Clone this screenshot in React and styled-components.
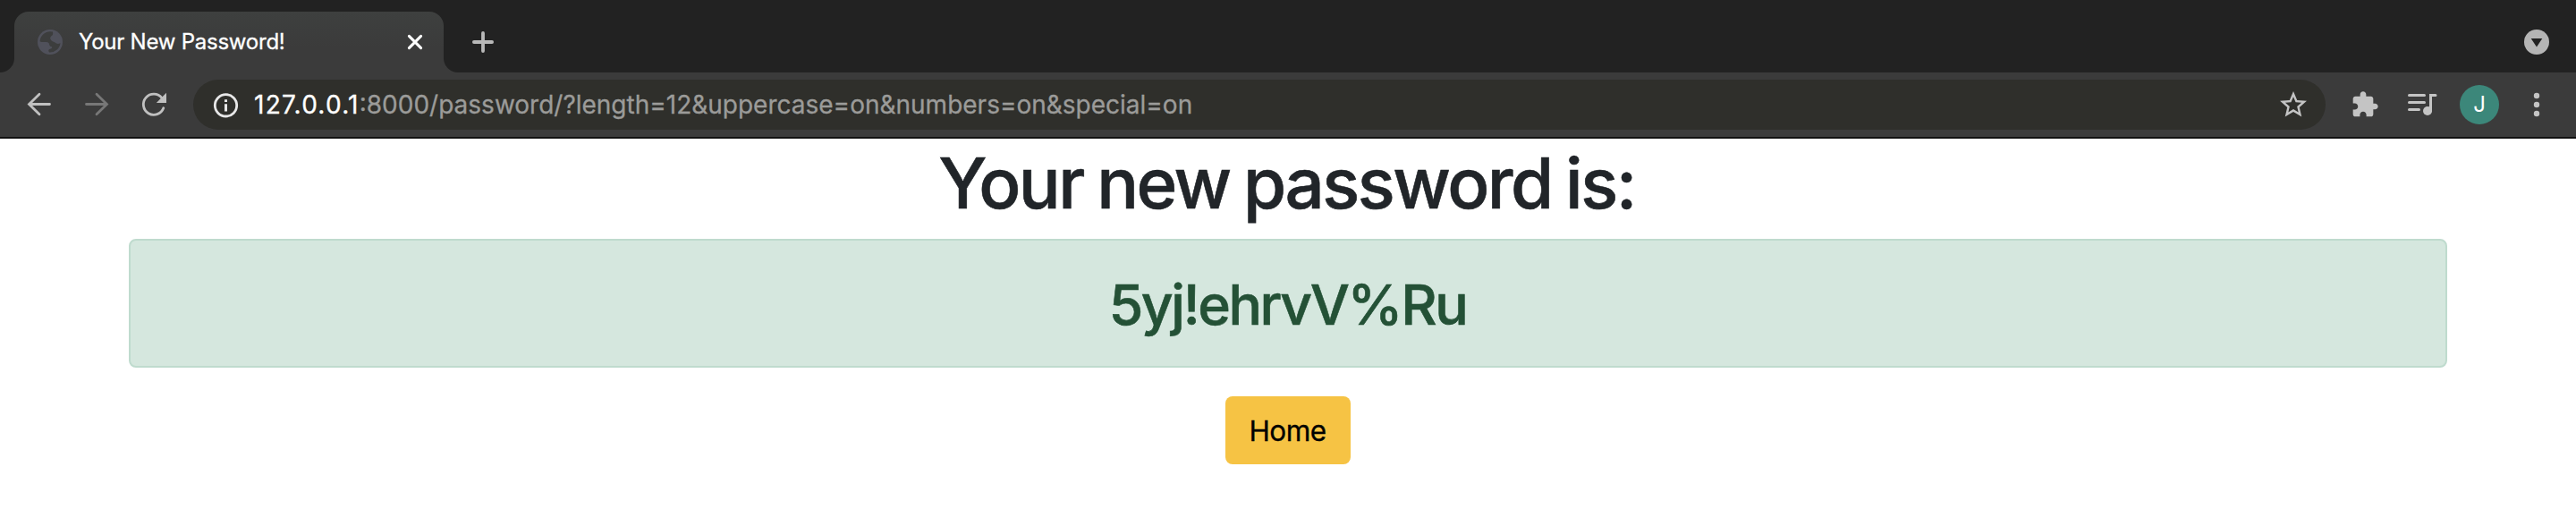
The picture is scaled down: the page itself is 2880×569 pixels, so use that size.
import React from "react";
import styled, { createGlobalStyle } from "styled-components";

const Global = createGlobalStyle`
  *, *::before, *::after { box-sizing: border-box; }
  body { margin: 0; background: #fff; font-family: Inter, "Liberation Sans", sans-serif; }
`;

const Window = styled.div`
  height: 569px;
  display: flex;
  flex-direction: column;
  background: #fff;
  overflow: hidden;
`;

const TabStrip = styled.header`
  height: 81px;
  padding: 13px 24px 0 16px;
  display: flex;
  background: #222222;
`;

const Tab = styled.div`
  position: relative;
  width: 480px;
  height: 68px;
  padding: 0 22px 0 23px;
  display: flex;
  align-items: center;
  background: linear-gradient(#3e403f, #3b3b3b 60%);
  border-radius: 16px 16px 0 0;

  &::before, &::after {
    content: "";
    position: absolute;
    bottom: 0;
    width: 16px;
    height: 16px;
  }
  &::before { left: -16px; background: radial-gradient(circle at 0 0, #222222 15.5px, #3b3b3b 16.5px); }
  &::after { right: -16px; background: radial-gradient(circle at 100% 0, #222222 15.5px, #3b3b3b 16.5px); }
`;

const Line = styled.span`
  display: block;
  white-space: pre;
  font-size: ${(p) => p.$size}px;
  line-height: ${(p) => p.$size * 1.25}px;
  letter-spacing: ${(p) => p.$track || 0}px;
  color: ${(p) => p.$color || "#fff"};
  -webkit-text-stroke: 0.3px currentColor;
`;

const TabTitle = styled(Line)`
  flex: 1;
  margin-left: 15px;
`;

const Glyph = styled.svg`
  display: block;
  flex: none;
  width: ${(p) => p.$w}px;
  height: ${(p) => p.$h || p.$w}px;
  margin-left: ${(p) => p.$ml || 0}px;
  overflow: visible;
`;

const NewTab = styled.div`
  margin-left: 32px;
  padding-top: 22px;
  flex: 1;
`;

const TabSearch = styled.div`
  padding: 20px 6px 0 0;
`;

const Toolbar = styled.div`
  height: 74px;
  padding: 0 0 0 24px;
  display: flex;
  align-items: center;
  background: #3b3b3b;
  border-bottom: 2px solid #111111;
`;

const AddressBar = styled.div`
  width: 2384px;
  height: 56px;
  margin-left: 26px;
  padding: 0 18px 0 20px;
  display: flex;
  align-items: center;
  border-radius: 28px;
  background: #2f2f2b;
`;

const Url = styled(Line)`
  flex: 1;
  margin-left: 15px;
`;

const Host = styled.span`
  letter-spacing: 1.25px;
  color: #fff;
`;

const Avatar = styled.div`
  width: 44px;
  height: 44px;
  margin-left: 25px;
  border-radius: 50%;
  display: flex;
  align-items: center;
  justify-content: center;
  background: #3c877a;
`;

const Initial = styled.span`
  font-size: 24px;
  line-height: 30px;
  color: #fff;
`;

const Page = styled.main`
  padding: 0 144px;
  display: flex;
  flex-direction: column;
  align-items: center;
`;

const Heading = styled.h1`
  margin: 0 3px 16px 0;
  height: 96px;
  line-height: 100px;
  font-size: 78px;
  font-weight: 500;
  letter-spacing: -2.5px;
  word-spacing: -3px;
  color: #212529;
  white-space: nowrap;
  -webkit-text-stroke: 0.6px currentColor;
`;

const Alert = styled.div`
  width: 100%;
  height: 144px;
  display: flex;
  align-items: center;
  justify-content: center;
  background: #d5e7de;
  border: 2px solid #bfdbce;
  border-radius: 8px;
`;

const Password = styled.h2`
  margin: 2px 1px 0 0;
  font-size: 62.4px;
  line-height: 77px;
  font-weight: 500;
  letter-spacing: -2.4px;
  color: #245136;
  -webkit-text-stroke: 0.6px currentColor;
`;

const HomeButton = styled.button`
  width: 140px;
  height: 76px;
  margin-top: 32px;
  padding: 2px 1px 0 0;
  border: 0;
  border-radius: 8px;
  background: #f6c344;
  color: #000;
  font: 400 31.5px/48px Inter, sans-serif;
  letter-spacing: -0.6px;
  -webkit-text-stroke: 0.3px currentColor;
`;

export default function App() {
  return (
    <Window>
      <Global />
      <TabStrip>
        <Tab>
          <Glyph $w={34} viewBox="0 0 34 34">
            <circle cx="17" cy="17" r="14" fill="#50515b" />
            <path
              d="M20 5.600A11.600 11.600 0 0 0 5.600 16.200C8.500 18 12 16.800 14.500 17.800C17 19 15.500 21.500 18 22C20 22.400 19.500 24.500 17 24.700C15 25 14.800 27 16 28.500A11.600 11.600 0 0 0 28.500 18C26.500 19.500 24 19 22.500 17.500C20.500 16.500 18.500 16 17.500 14C16.500 12 18 10.500 19.500 9.500C20.500 8.500 20 7 20 5.600Z"
              fill="#3c3d3d"
            />
            <path
              d="M6 17H12.500C15 17 16 18.500 16 20.500H14V26.500L16 28.600C10 28.400 5.500 23.500 6 17Z"
              fill="#50515b"
            />
          </Glyph>
          <TabTitle $size={24} $track={-0.24}>Your New Password!</TabTitle>
          <Glyph $w={20} viewBox="0 0 20 20" stroke="#fff" strokeWidth="3" strokeLinecap="round">
            <path d="M3.400 3.400L16.600 16.600M16.600 3.400L3.400 16.600" />
          </Glyph>
        </Tab>
        <NewTab>
          <Glyph $w={24} viewBox="0 0 24 24" stroke="#b8b8b8" strokeWidth="3.800" strokeLinecap="round">
            <path d="M12 1.900V22.100M1.900 12H22.100" />
          </Glyph>
        </NewTab>
        <TabSearch>
          <Glyph $w={28} viewBox="0 0 28 28">
            <circle cx="14" cy="14" r="14" fill="#b5b5b5" />
            <path d="M7.700 10H20.300L14 19.500Z" fill="#222222" />
          </Glyph>
        </TabSearch>
      </TabStrip>

      <Toolbar>
        <Glyph $w={40} viewBox="0 0 40 40" fill="none" stroke="#c0c0c0" strokeWidth="2.800" strokeLinecap="round">
          <path d="M31.500 19.500H9M20 8.300L8.500 19.500L20 30.700" />
        </Glyph>
        <Glyph $w={40} $ml={24} viewBox="0 0 40 40" fill="none" stroke="#777777" strokeWidth="2.800" strokeLinecap="round">
          <path d="M8.500 19.500H31M20 8.300L31.500 19.500L20 30.700" />
        </Glyph>
        <Glyph $w={36} $ml={26} viewBox="0 0 36 36" fill="none">
          <path d="M28.800 21.800A11.600 11.600 0 1 1 27 10.500" stroke="#c0c0c0" strokeWidth="2.800" strokeLinecap="round" />
          <path d="M32 4.800V16H20.800Z" fill="#c0c0c0" />
        </Glyph>
        <AddressBar>
          <Glyph $w={33} viewBox="0 0 33 33" fill="none">
            <circle cx="16.500" cy="16.800" r="12.200" stroke="#e8e8e8" strokeWidth="2.800" />
            <path d="M16.500 15.200V23.400M16.500 10.300V13.100" stroke="#e8e8e8" strokeWidth="3" />
          </Glyph>
          <Url $size={28} $color="#9b9b99"><Host>127.0.0.1</Host>:8000/password/?length=12&amp;uppercase=on&amp;numbers=on&amp;special=on</Url>
          <Glyph $w={36} viewBox="0 0 24 24" fill="#c4c4c4">
            <path d="M22 9.240l-7.190-.62L12 2 9.190 8.630 2 9.240l5.460 4.730L5.820 21 12 17.270 18.180 21l-1.630-7.030L22 9.240zM12 15.400l-3.760 2.270 1-4.280-3.320-2.880 4.380-.38L12 6.100l1.710 4.040 4.380.38-3.320 2.880 1 4.280L12 15.400z" />
          </Glyph>
        </AddressBar>
        <Glyph $w={32} $ml={28} viewBox="0 0 24 24" fill="#c4c4c4">
          <path d="M20.500 11H19V7c0-1.100-.9-2-2-2h-4V3.500C13 2.120 11.880 1 10.500 1S8 2.120 8 3.500V5H4c-1.100 0-1.990.9-1.990 2v3.800H3.500c1.490 0 2.700 1.210 2.700 2.700s-1.210 2.700-2.700 2.700H2V20c0 1.100.9 2 2 2h3.800v-1.500c0-1.490 1.210-2.700 2.700-2.700 1.490 0 2.700 1.210 2.700 2.700V22H17c1.100 0 2-.9 2-2v-4h1.500c1.380 0 2.500-1.120 2.500-2.500S21.880 11 20.500 11z" />
        </Glyph>
        <Glyph $w={36} $h={32} $ml={29} viewBox="0 0 36 32" fill="none" stroke="#c4c4c4" strokeWidth="3" strokeLinecap="round">
          <path d="M4.500 5.500H21.500M4.500 13.500H21.500M4.500 21.500H15.500" />
          <path d="M28.500 23V5.500H34" />
          <circle cx="25" cy="23" r="5" fill="#c4c4c4" stroke="none" />
        </Glyph>
        <Avatar><Initial>J</Initial></Avatar>
        <Glyph $w={8} $h={28} $ml={38} viewBox="0 0 8 28" fill="#c4c4c4">
          <circle cx="4" cy="4" r="3.200" />
          <circle cx="4" cy="14" r="3.200" />
          <circle cx="4" cy="24" r="3.200" />
        </Glyph>
      </Toolbar>

      <Page>
        <Heading>Your new password is:</Heading>
        <Alert><Password>5yj!ehrvV%Ru</Password></Alert>
        <HomeButton>Home</HomeButton>
      </Page>
    </Window>
  );
}
